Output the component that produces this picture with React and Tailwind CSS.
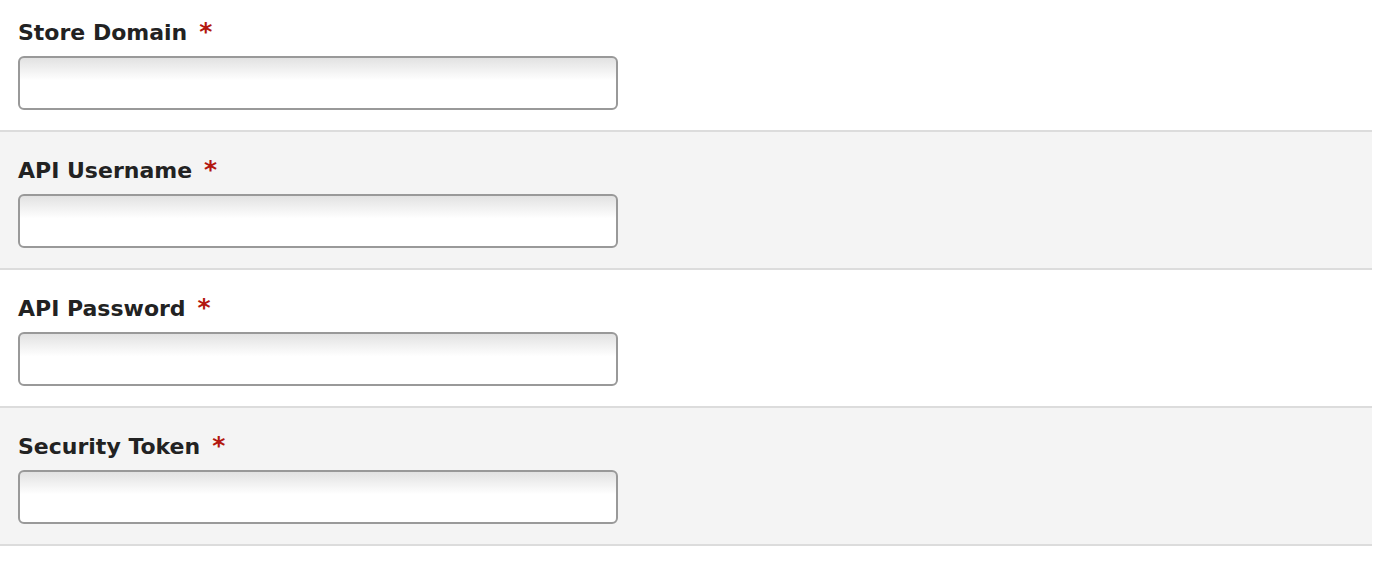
const fields = [
  { label: "Store Domain", shade: false },
  { label: "API Username", shade: true },
  { label: "API Password", shade: false, type: "password" },
  { label: "Security Token", shade: true },
];

const Field = ({ label, shade, type, first }) => (
  <div
    className={`${shade ? "bg-[#f4f4f4]" : "bg-white"} ${first ? "pt-[20px]" : "pt-[26px]"} pb-[20px] px-[18px] border-b-2 border-[#dcdcdc]`}
  >
    <label className="flex items-start text-[22px] leading-[26px] font-bold text-[#222]">
      {label}
      <span className="ml-[12px] text-[25px] leading-[24px] text-[#b3170f]">*</span>
    </label>
    <input
      type={type || "text"}
      className="mt-[10px] block w-[600px] h-[54px] rounded-[6px] border-2 border-[#999] bg-linear-to-b from-[#e2e2e2] to-white to-45% px-2 text-[18px] outline-none"
    />
  </div>
);

export default function App() {
  return (
    <div className="w-[1372px] font-['DejaVu_Sans',Verdana,sans-serif]">
      {fields.map((f, i) => (
        <Field key={f.label} {...f} first={i === 0} />
      ))}
    </div>
  );
}
